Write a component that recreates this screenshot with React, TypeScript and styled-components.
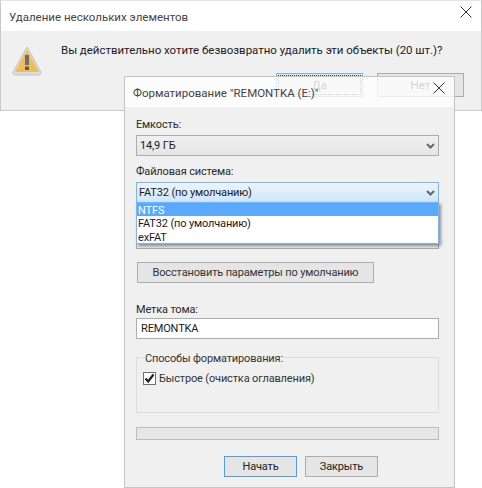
import React from "react";
import styled, { createGlobalStyle } from "styled-components";

const GlobalStyle = createGlobalStyle`
  html, body {
    margin: 0;
    padding: 0;
    background: #fff;
  }
  body {
    font-family: Roboto, "Noto Sans", sans-serif;
    font-size: 11.5px;
    color: #1a1a1a;
  }
`;

const Desktop = styled.div`
  position: relative;
  width: 482px;
  height: 488px;
  overflow: hidden;
`;

const BackWindow = styled.div`
  width: 482px;
  height: 111px;
  box-sizing: border-box;
  border: 1px solid #c9c9c9;
  border-top-color: #e4e4e4;
  background: #f0f0f0;
  display: flex;
  flex-direction: column;
`;

const TitleBar = styled.div<{ $height: number; $see?: boolean }>`
  height: ${(p) => p.$height}px;
  box-sizing: border-box;
  flex: none;
  display: flex;
  align-items: center;
  justify-content: space-between;
  padding: 2px 9px 0 8px;
  background: ${(p) => (p.$see ? "rgba(255,255,255,0.78)" : "#fff")};
  color: #444;
`;

const Close = styled.svg`
  width: 12px;
  height: 12px;
  display: block;
  align-self: flex-start;
  margin-top: 3px;
`;

const BackBody = styled.div`
  flex: 1;
  display: flex;
  padding: 15px 16px 0 11px;
  position: relative;
`;

const Message = styled.div`
  margin: -4px 0 0 19px;
  color: #1f1a2a;
  line-height: 16px;
  white-space: nowrap;
  letter-spacing: -0.03px;
`;

const BackButtons = styled.div`
  position: absolute;
  right: 17px;
  top: 42px;
  display: flex;
  gap: 14px;
`;

const BackButton = styled.div<{ $focus?: boolean }>`
  width: 87px;
  height: 24px;
  box-sizing: border-box;
  border: 1px solid ${(p) => (p.$focus ? "#7eb4ea" : "#adadad")};
  background: #e5e5e5;
  display: flex;
  align-items: center;
  justify-content: center;
  color: #333;
  position: relative;
  ${(p) => p.$focus && "outline: 1px dotted #444; outline-offset: -3px;"}
`;

const FormatWindow = styled.div`
  position: absolute;
  left: 124px;
  top: 76px;
  width: 331px;
  height: 412px;
  box-sizing: border-box;
  border: 1px solid #c4c4c4;
  display: flex;
  flex-direction: column;
`;

const Panel = styled.div`
  flex: 1;
  background: #f0f0f0;
  padding: 10px 15px 0 11px;
  display: flex;
  flex-direction: column;
  position: relative;
  font-size: 11px;
  letter-spacing: -0.15px;
`;

const Label = styled.div<{ $top: number }>`
  margin-top: ${(p) => p.$top}px;
  height: 16px;
  line-height: 16px;
  color: #2a2a2a;
`;

const Combo = styled.div<{ $active?: boolean }>`
  margin-top: 2px;
  height: 21px;
  box-sizing: border-box;
  border: 1px solid ${(p) => (p.$active ? "#7eb4ea" : "#acacac")};
  background: ${(p) =>
    p.$active
      ? "linear-gradient(#ecf4fc, #cfe5fb)"
      : "linear-gradient(#f0f0f0, #e5e5e5)"};
  display: flex;
  align-items: center;
  justify-content: space-between;
  padding: 0 3px 0 ${(p) => (p.$active ? 2 : 3)}px;
`;

const Chevron = styled.svg`
  width: 9px;
  height: 6px;
  display: block;
`;

const HiddenCombo = styled.div`
  margin-top: 5px;
  height: 41px;
  box-sizing: border-box;
  border: 1px solid #acacac;
  background: #e8e8e8;
`;

const Dropdown = styled.div`
  position: absolute;
  left: 11px;
  top: 95px;
  width: 303px;
  box-sizing: border-box;
  border: 1px solid #7eb4ea;
  background: #fff;
  box-shadow: 2px 2px 3px rgba(0, 0, 0, 0.4);
`;

const Option = styled.div<{ $selected?: boolean }>`
  height: 13.3px;
  line-height: 16px;
  padding-left: 1px;
  color: ${(p) => (p.$selected ? "#fff" : "#1a1a1a")};
  background: ${(p) => (p.$selected ? "#5aa9fb" : "transparent")};
`;

const RestoreButton = styled.div`
  margin: 13px 0 0 1px;
  width: 237px;
  height: 21px;
  box-sizing: border-box;
  border: 1px solid #adadad;
  background: #e5e5e5;
  display: flex;
  align-items: center;
  justify-content: center;
  color: #333;
  white-space: nowrap;
`;

const TextInput = styled.div`
  height: 21px;
  box-sizing: border-box;
  border: 1px solid #acacac;
  background: #fff;
  padding-left: 4px;
  line-height: 19px;
`;

const Group = styled.fieldset`
  margin: 8px 0 0;
  padding: 0 0 0 6px;
  height: 66px;
  box-sizing: border-box;
  border: 1px solid #dcdcdc;
  min-width: 0;
`;

const Legend = styled.legend`
  padding: 4px 1px 0;
  margin-left: 1px;
  line-height: 16px;
  color: #333;
`;

const CheckRow = styled.div`
  display: flex;
  align-items: center;
  gap: 3px;
  margin-top: 2px;
  line-height: 16px;
  color: #333;
`;

const CheckLabel = styled.span`
  padding-top: 2px;
`;

const CheckBox = styled.div`
  width: 13px;
  height: 13px;
  box-sizing: border-box;
  border: 1px solid #707070;
  background: #fff;
  display: flex;
  align-items: center;
  justify-content: center;
`;

const Progress = styled.div`
  margin-top: 14px;
  height: 13px;
  box-sizing: border-box;
  border: 1px solid #bcbcbc;
  background: #e6e6e6;
`;

const Footer = styled.div`
  margin: 16px 0 0 88px;
  display: flex;
  gap: 8px;
`;

const FooterButton = styled.div<{ $primary?: boolean }>`
  width: 73px;
  height: 21px;
  box-sizing: border-box;
  border: 1px solid ${(p) => (p.$primary ? "#4f9ee8" : "#adadad")};
  background: #e5e5e5;
  display: flex;
  align-items: center;
  justify-content: center;
  color: #222;
`;

const CloseIcon = () => (
  <Close viewBox="0 0 12 12">
    <path d="M0.5 0.5 L11.5 11.5 M11.5 0.5 L0.5 11.5" stroke="#333" strokeWidth="1" fill="none" />
  </Close>
);

const ChevronIcon = () => (
  <Chevron viewBox="0 0 9 6">
    <path d="M1 1 L4.5 4.5 L8 1" stroke="#666" strokeWidth="2" fill="none" />
  </Chevron>
);

const WarningIcon = () => (
  <svg width="30" height="30" viewBox="0 0 30 30" style={{ flex: "none" }}>
    <path d="M15 1 L29 26 Q29 29 27 29 L3 29 Q1 29 1 26 Z" fill="#dcdcdc" stroke="#c4c4c4" strokeWidth="1" />
    <path d="M15 4 L27 26 L3 26 Z" fill="#eebc5a" />
    <rect x="13" y="9" width="4" height="10" fill="#6d6d6d" />
    <rect x="13" y="20.5" width="4" height="3.5" fill="#5a5a5a" />
  </svg>
);

export default function App() {
  return (
    <Desktop>
      <GlobalStyle />
      <BackWindow>
        <TitleBar $height={30}>
          <span>Удаление нескольких элементов</span>
          <CloseIcon />
        </TitleBar>
        <BackBody>
          <WarningIcon />
          <Message>Вы действительно хотите безвозвратно удалить эти объекты (20 шт.)?</Message>
          <BackButtons>
            <BackButton $focus>Да</BackButton>
            <BackButton>Нет</BackButton>
          </BackButtons>
        </BackBody>
      </BackWindow>

      <FormatWindow>
        <TitleBar $height={30} $see>
          <span>Форматирование "REMONTKA (E:)"</span>
          <CloseIcon />
        </TitleBar>
        <Panel>
          <Label $top={0}>Емкость:</Label>
          <Combo>
            <span>14,9 ГБ</span>
            <ChevronIcon />
          </Combo>
          <Label $top={8}>Файловая система:</Label>
          <Combo $active>
            <span>FAT32 (по умолчанию)</span>
            <ChevronIcon />
          </Combo>
          <Dropdown>
            <Option $selected>NTFS</Option>
            <Option>FAT32 (по умолчанию)</Option>
            <Option>exFAT</Option>
          </Dropdown>
          <HiddenCombo />
          <RestoreButton>Восстановить параметры по умолчанию</RestoreButton>
          <Label $top={19}>Метка тома:</Label>
          <TextInput>REMONTKA</TextInput>
          <Group>
            <Legend>Способы форматирования:</Legend>
            <CheckRow>
              <CheckBox>
                <svg width="11" height="11" viewBox="0 0 11 11">
                  <path d="M1.5 5.5 L4.2 8.5 L9.5 1.5" stroke="#222" strokeWidth="2.2" fill="none" />
                </svg>
              </CheckBox>
              <CheckLabel>Быстрое (очистка оглавления)</CheckLabel>
            </CheckRow>
          </Group>
          <Progress />
          <Footer>
            <FooterButton $primary>Начать</FooterButton>
            <FooterButton>Закрыть</FooterButton>
          </Footer>
        </Panel>
      </FormatWindow>
    </Desktop>
  );
}
